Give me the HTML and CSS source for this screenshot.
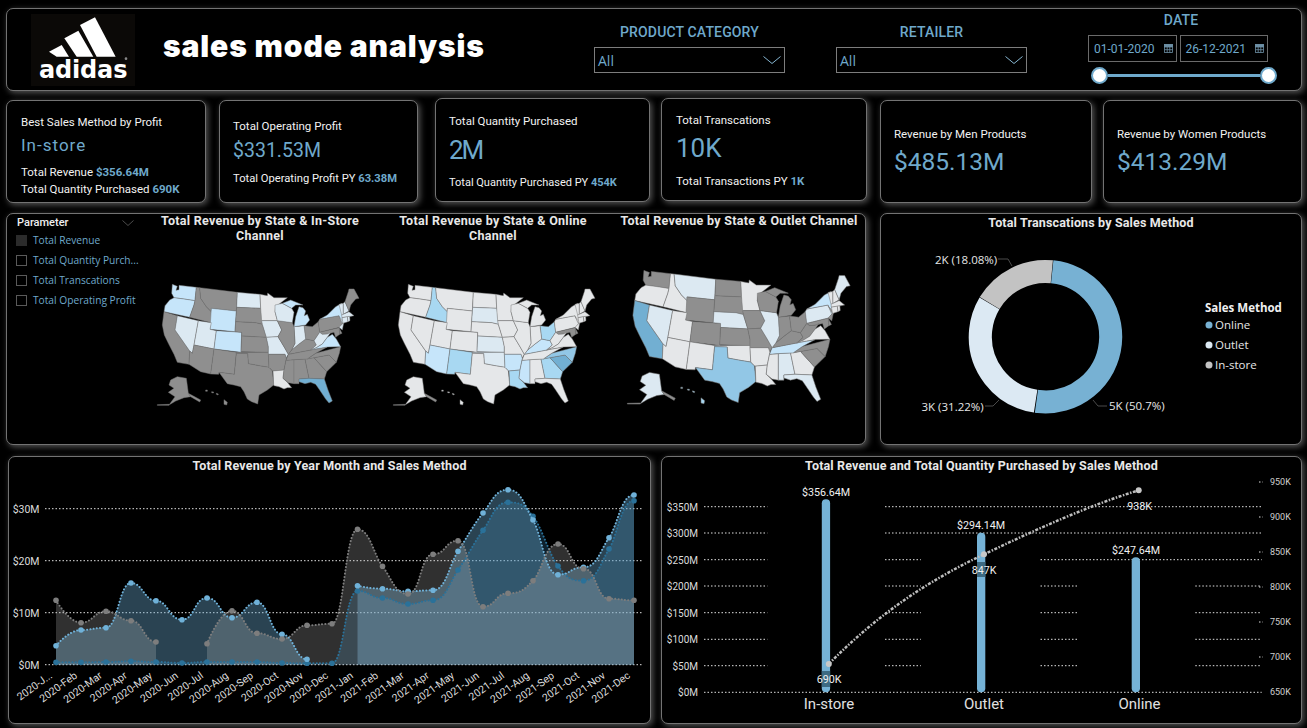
FILE: index.html
```html
<!DOCTYPE html>
<html lang="en">
<head>
<meta charset="utf-8">
<title>sales mode analysis</title>
<link rel="stylesheet" href="styles.css">
</head>
<body>
<main class="page">

<header class="panel header">
  <div class="logo">
    <svg viewBox="18 12 312 216" width="104" height="72">
      <rect x="18" y="12" width="312" height="216" fill="#0b0907"/>
      <polygon points="72,125 110,105 132,140 95,140" fill="#fff"/>
      <polygon points="118,85 160,62 205,140 155,140" fill="#fff"/>
      <polygon points="165,45 210,22 272,140 215,140" fill="#fff"/>
      <text x="42" y="204" class="logo-word">adidas</text>
      <circle cx="303" cy="146" r="4" fill="#888"/>
    </svg>
  </div>
  <h1 class="title">sales mode analysis</h1>
  <div class="filter filter-category">
    <div class="filter-label">PRODUCT CATEGORY</div>
    <div class="dropdown">All
      <svg class="chev" viewBox="0 0 18 8" width="18" height="8"><polyline points="0.5,0.5 9,7.5 17.5,0.5"/></svg>
    </div>
  </div>
  <div class="filter filter-retailer">
    <div class="filter-label">RETAILER</div>
    <div class="dropdown">All
      <svg class="chev" viewBox="0 0 18 8" width="18" height="8"><polyline points="0.5,0.5 9,7.5 17.5,0.5"/></svg>
    </div>
  </div>
  <div class="filter filter-date">
    <div class="filter-label date-label">DATE</div>
    <div class="date-boxes">
      <div class="date-box">01-01-2020
        <svg class="cal" viewBox="0 0 9 9" width="9" height="9"><rect x="0.5" y="0.5" width="8" height="8"/><rect x="0.5" y="0.5" width="8" height="2.5" class="cal-top"/><path d="M3.2 3v5.500M5.800 3v5.500M.5 5.700h8"/></svg>
      </div>
      <div class="date-box">26-12-2021
        <svg class="cal" viewBox="0 0 9 9" width="9" height="9"><rect x="0.5" y="0.5" width="8" height="8"/><rect x="0.5" y="0.5" width="8" height="2.5" class="cal-top"/><path d="M3.2 3v5.500M5.800 3v5.500M.5 5.700h8"/></svg>
      </div>
    </div>
    <div class="slider"><span class="knob"></span><span class="rail"></span><span class="knob"></span></div>
  </div>
</header>

<section class="cards">
  <article class="panel card card-1">
    <p class="card-label">Best Sales Method by Profit</p>
    <p class="card-value value-text">In-store</p>
    <p class="card-sub">Total Revenue <b>$356.64M</b></p>
    <p class="card-sub">Total Quantity Purchased <b>690K</b></p>
  </article>
  <article class="panel card card-2">
    <p class="card-label">Total Operating Profit</p>
    <p class="card-value">$331.53M</p>
    <p class="card-sub">Total Operating Profit PY <b>63.38M</b></p>
  </article>
  <article class="panel card card-3">
    <p class="card-label">Total Quantity Purchased</p>
    <p class="card-value value-big value-tight">2M</p>
    <p class="card-sub">Total Quantity Purchased PY <b>454K</b></p>
  </article>
  <article class="panel card card-4">
    <p class="card-label">Total Transcations</p>
    <p class="card-value value-big">10K</p>
    <p class="card-sub">Total Transactions PY <b>1K</b></p>
  </article>
  <article class="panel card card-5">
    <p class="card-label">Revenue by Men Products</p>
    <p class="card-value value-large">$485.13M</p>
  </article>
  <article class="panel card card-6">
    <p class="card-label">Revenue by Women Products</p>
    <p class="card-value value-large">$413.29M</p>
  </article>
</section>

<section class="row-middle">
  <div class="panel maps">
    <aside class="slicer">
      <div class="slicer-head">Parameter
        <svg class="slicer-chev" viewBox="0 0 12 6" width="12" height="6"><polyline points="0.500,0.500 6,5.500 11.500,0.500"/></svg>
      </div>
      <ul class="slicer-list">
        <li><span class="box box-on"></span>Total Revenue</li>
        <li><span class="box"></span>Total Quantity Purch...</li>
        <li><span class="box"></span>Total Transcations</li>
        <li><span class="box"></span>Total Operating Profit</li>
      </ul>
    </aside>

    <figure class="map-col map-col-1">
      <figcaption class="map-title">Total Revenue by State &amp; In-Store<br>Channel</figcaption>
      <svg class="map" viewBox="-21 -87 648 594" width="216" height="198">
        <defs>
          <path id="WA" d="M40 28 55 34 51 46 60 44 60 31 112 37 108 77 75 72 45 68 38 55z"/>
          <path id="OR" d="M45 68 75 72 108 77 105 90 92 127 15 110 18 92 32 75z"/>
          <path id="CA" d="M15 110 55 122 48 165 92 228 90 268 55 262 45 238 28 205 16 180 10 150z"/>
          <path id="NV" d="M55 122 118 137 105 210 100 235 92 228 48 165z"/>
          <path id="ID" d="M112 37 122 38 125 70 142 95 157 110 157 143 92 127 105 90 108 77z"/>
          <path id="MT" d="M122 38 235 52 232 108 157 100 157 110 142 95 125 70z"/>
          <path id="WY" d="M157 100 232 108 228 170 153 163z"/>
          <path id="UT" d="M118 137 157 143 153 163 172 167 165 222 105 210z"/>
          <path id="CO" d="M172 167 248 172 246 232 165 222z"/>
          <path id="AZ" d="M105 210 165 222 155 297 125 290 90 268 92 228 100 235z"/>
          <path id="NM" d="M165 222 232 232 226 298 180 292 179 298 155 297z"/>
          <path id="ND" d="M235 52 303 58 305 100 233 97z"/>
          <path id="SD" d="M233 97 305 100 308 115 310 148 290 143 230 140z"/>
          <path id="NE" d="M230 140 290 143 310 148 322 187 248 183 248 172 228 170z"/>
          <path id="KS" d="M248 183 322 187 328 215 328 232 246 230z"/>
          <path id="OK" d="M232 232 328 232 330 277 300 272 268 266 266 236 232 235z"/>
          <path id="TX" d="M232 235 266 236 268 266 300 272 330 277 340 287 344 330 325 345 300 360 296 387 278 380 265 372 255 350 245 335 225 330 205 326 180 292 226 298z"/>
          <path id="MN" d="M303 58 325 62 326 54 345 68 385 68 350 95 348 110 355 137 308 137 305 100z"/>
          <path id="IA" d="M308 137 355 137 368 165 357 185 322 187 310 148z"/>
          <path id="MO" d="M322 187 357 185 375 215 388 238 381 250 378 238 328 238 328 215z"/>
          <path id="AR" d="M328 238 378 238 382 250 375 285 342 288 340 287 330 277z"/>
          <path id="LA" d="M342 288 375 285 372 310 385 322 398 338 385 338 375 342 360 335 345 332 344 330z"/>
          <path id="MS" d="M381 256 405 254 405 326 388 323 372 310 375 285z"/>
          <path id="AL" d="M405 254 438 252 450 310 420 312 420 326 405 326z"/>
          <path id="GA" d="M438 252 465 248 503 290 496 312 450 310z"/>
          <path id="FL" d="M420 312 450 310 496 312 507 345 520 378 510 384 500 372 482 345 470 328 455 322 438 326 420 320z"/>
          <path id="SC" d="M465 248 510 240 532 262 503 290z"/>
          <path id="NC" d="M445 252 470 235 545 215 541 235 532 262 510 240 465 248z"/>
          <path id="TN" d="M381 256 388 238 470 222 505 216 470 235 445 252 405 254z"/>
          <path id="KY" d="M388 238 398 225 420 207 440 192 465 197 472 210 455 225z"/>
          <path id="OH" d="M435 152 460 155 478 140 482 172 465 197 440 192z"/>
          <path id="IN" d="M405 155 435 152 440 192 420 207 398 225 408 205z"/>
          <path id="IL" d="M355 137 400 143 405 155 408 205 398 225 388 238 375 215 357 185 368 165z"/>
          <path id="WI" d="M348 90 370 85 398 100 405 112 400 143 355 137 348 110z"/>
          <path id="MI" d="M370 85 395 75 432 90 410 90 398 100z M410 125 420 95 432 98 440 108 436 122 445 118 452 135 440 150 405 155z"/>
          <path id="PA" d="M482 133 540 122 552 145 542 157 482 172 478 140z"/>
          <path id="NY" d="M482 133 505 120 530 95 548 85 553 118 550 128 555 140 549 145 540 122z"/>
          <path id="NJ" d="M540 125 555 140 550 165 540 157 552 145z"/>
          <path id="DE" d="M540 158 549 175 542 178z"/>
          <path id="MD" d="M482 172 540 158 542 178 530 187 525 172 505 177 490 178z"/>
          <path id="WV" d="M465 197 482 172 490 178 505 177 515 172 505 187 490 207 472 218 455 225 472 210z"/>
          <path id="VA" d="M455 225 472 218 490 207 505 187 520 178 532 192 545 215 505 216 470 222z"/>
          <path id="VT" d="M540 88 553 85 553 118 548 120z"/>
          <path id="NH" d="M553 85 558 80 570 108 553 118z"/>
          <path id="ME" d="M558 80 568 50 570 42 585 42 600 70 590 72 575 90 570 108z"/>
          <path id="MA" d="M548 120 570 110 585 122 570 125 549 128z"/>
          <path id="CT" d="M549 128 565 125 567 140 552 145z"/>
          <path id="RI" d="M565 125 572 124 573 137 567 140z"/>
          <path id="AK" d="M35 315 55 305 82 310 88 355 95 365 75 368 50 378 30 390 48 365 28 352 45 340 30 330z"/>
          <path id="AS" d="M88 355 125 375 122 381 95 365z"/>
          <path id="AC" d="M30 388 -5 389 -5 391 30 391z"/>
          <path id="HI" d="M140 345 145 345 145 349 140 349z M158 350 164 351 163 354 158 353z M172 355 178 357 177 360 172 358z M195 374 205 382 203 390 195 388z"/>
        </defs>
        <use href="#WA" class="f3"/><use href="#OR" class="f3"/><use href="#CA" class="f0"/><use href="#NV" class="f2"/><use href="#ID" class="f0"/><use href="#MT" class="f0"/>
        <use href="#WY" class="f3"/><use href="#UT" class="f2"/><use href="#CO" class="f3"/><use href="#AZ" class="f0"/><use href="#NM" class="f0"/><use href="#ND" class="f2"/>
        <use href="#SD" class="f0"/><use href="#NE" class="f0"/><use href="#KS" class="f0"/><use href="#OK" class="f0"/><use href="#TX" class="f0"/><use href="#MN" class="f1"/>
        <use href="#IA" class="f2"/><use href="#MO" class="f2"/><use href="#AR" class="f0"/><use href="#LA" class="f1"/><use href="#MS" class="f0"/><use href="#AL" class="f0"/>
        <use href="#GA" class="f0"/><use href="#FL" class="f6"/><use href="#SC" class="f0"/><use href="#NC" class="f0"/><use href="#TN" class="f0"/><use href="#KY" class="f0"/>
        <use href="#OH" class="f0"/><use href="#IN" class="f2"/><use href="#IL" class="f0"/><use href="#WI" class="f2"/><use href="#MI" class="f3"/><use href="#PA" class="f0"/>
        <use href="#NY" class="f3"/><use href="#NJ" class="f2"/><use href="#DE" class="f0"/><use href="#MD" class="f0"/><use href="#WV" class="f2"/><use href="#VA" class="f3"/>
        <use href="#VT" class="f2"/><use href="#NH" class="f2"/><use href="#ME" class="f0"/><use href="#MA" class="f2"/><use href="#CT" class="f2"/><use href="#RI" class="f2"/>
        <use href="#AK" class="f0"/><use href="#AS" class="f0"/><use href="#AC" class="f0"/><use href="#HI" class="f0"/>
      </svg>
    </figure>

    <figure class="map-col map-col-2">
      <figcaption class="map-title">Total Revenue by State &amp; Online<br>Channel</figcaption>
      <svg class="map" viewBox="-81 -87 750 594" width="250" height="198">
        <use href="#WA" class="f1"/><use href="#OR" class="f1"/><use href="#CA" class="f1"/><use href="#NV" class="f1"/><use href="#ID" class="f4"/><use href="#MT" class="f1"/>
        <use href="#WY" class="f1"/><use href="#UT" class="f1"/><use href="#CO" class="f1"/><use href="#AZ" class="f3"/><use href="#NM" class="f4"/><use href="#ND" class="f1"/>
        <use href="#SD" class="f2"/><use href="#NE" class="f1"/><use href="#KS" class="f2"/><use href="#OK" class="f2"/><use href="#TX" class="f1"/><use href="#MN" class="f1"/>
        <use href="#IA" class="f1"/><use href="#MO" class="f1"/><use href="#AR" class="f3"/><use href="#LA" class="f4"/><use href="#MS" class="f3"/><use href="#AL" class="f1"/>
        <use href="#GA" class="f4"/><use href="#FL" class="f1"/><use href="#SC" class="f6"/><use href="#NC" class="f5"/><use href="#TN" class="f1"/><use href="#KY" class="f3"/>
        <use href="#OH" class="f4"/><use href="#IN" class="f1"/><use href="#IL" class="f1"/><use href="#WI" class="f1"/><use href="#MI" class="f1"/><use href="#PA" class="f1"/>
        <use href="#NY" class="f1"/><use href="#NJ" class="f1"/><use href="#DE" class="f0"/><use href="#MD" class="f0"/><use href="#WV" class="f1"/><use href="#VA" class="f1"/>
        <use href="#VT" class="f1"/><use href="#NH" class="f1"/><use href="#ME" class="f1"/><use href="#MA" class="f1"/><use href="#CT" class="f1"/><use href="#RI" class="f1"/>
        <use href="#AK" class="f1"/><use href="#AS" class="f0"/><use href="#AC" class="f0"/><use href="#HI" class="f1"/>
      </svg>
    </figure>

    <figure class="map-col map-col-3">
      <figcaption class="map-title">Total Revenue by State &amp; Outlet Channel</figcaption>
      <svg class="map" viewBox="-29.800 -38.200 669.400 537.600" width="247" height="198">
        <use href="#WA" class="f0"/><use href="#OR" class="f1"/><use href="#CA" class="f6"/><use href="#NV" class="f2"/><use href="#ID" class="f1"/><use href="#MT" class="f2"/>
        <use href="#WY" class="f0"/><use href="#UT" class="f1"/><use href="#CO" class="f0"/><use href="#AZ" class="f1"/><use href="#NM" class="f1"/><use href="#ND" class="f0"/>
        <use href="#SD" class="f0"/><use href="#NE" class="f2"/><use href="#KS" class="f0"/><use href="#OK" class="f1"/><use href="#TX" class="f5"/><use href="#MN" class="f1"/>
        <use href="#IA" class="f0"/><use href="#MO" class="f0"/><use href="#AR" class="f1"/><use href="#LA" class="f1"/><use href="#MS" class="f1"/><use href="#AL" class="f2"/>
        <use href="#GA" class="f1"/><use href="#FL" class="f2"/><use href="#SC" class="f0"/><use href="#NC" class="f0"/><use href="#TN" class="f3"/><use href="#KY" class="f0"/>
        <use href="#OH" class="f0"/><use href="#IN" class="f0"/><use href="#IL" class="f2"/><use href="#WI" class="f0"/><use href="#MI" class="f0"/><use href="#PA" class="f2"/>
        <use href="#NY" class="f3"/><use href="#NJ" class="f0"/><use href="#DE" class="f0"/><use href="#MD" class="f0"/><use href="#WV" class="f0"/><use href="#VA" class="f1"/>
        <use href="#VT" class="f1"/><use href="#NH" class="f1"/><use href="#ME" class="f2"/><use href="#MA" class="f1"/><use href="#CT" class="f1"/><use href="#RI" class="f1"/>
        <use href="#AK" class="f2"/><use href="#AS" class="f0"/><use href="#AC" class="f0"/><use href="#HI" class="f4"/>
      </svg>
    </figure>
  </div>

  <figure class="panel donut-panel">
    <figcaption class="chart-title">Total Transcations by Sales Method</figcaption>
    <svg class="chart" viewBox="881 232 420 212" width="420" height="212">
      <g transform="rotate(-84.100 1045.500 336.700)" fill="none" stroke-width="23.100">
        <circle cx="1045.500" cy="336.700" r="65.200" pathLength="100" stroke="#c3c3c3" stroke-dasharray="17.900 82.100" stroke-dashoffset="-82"/>
        <circle cx="1045.500" cy="336.700" r="65.200" pathLength="100" stroke="#dce9f3" stroke-dasharray="31.120 68.880" stroke-dashoffset="-50.800"/>
        <circle cx="1045.500" cy="336.700" r="65.200" pathLength="100" stroke="#77b1d3" stroke-dasharray="50.600 49.400"/>
      </g>
      <g class="leaders">
        <polyline points="998,259 1008,259 1012,266"/>
        <polyline points="985,406 993,406 999,400"/>
        <polyline points="1107,406 1098,406 1093,400"/>
      </g>
      <text x="935" y="264" class="donut-label">2K (18.08%)</text>
      <text x="921.500" y="411" class="donut-label">3K (31.22%)</text>
      <text x="1109" y="410" class="donut-label">5K (50.7%)</text>
      <text x="1205" y="312" class="legend-head">Sales Method</text>
      <circle cx="1209" cy="325" r="3.500" fill="#77b1d3"/>
      <text x="1215" y="329" class="donut-label">Online</text>
      <circle cx="1209" cy="345" r="3.500" fill="#dce9f3"/>
      <text x="1215" y="349" class="donut-label">Outlet</text>
      <circle cx="1209" cy="365" r="3.500" fill="#c3c3c3"/>
      <text x="1215" y="369" class="donut-label">In-store</text>
    </svg>
  </figure>
</section>

<section class="row-bottom">
  <figure class="panel area-panel">
    <figcaption class="chart-title">Total Revenue by Year Month and Sales Method</figcaption>
    <svg class="chart" viewBox="9 475 641 248" width="641" height="248">
      <defs>
        <marker id="dot-gray" markerUnits="userSpaceOnUse" markerWidth="8" markerHeight="8" refX="4" refY="4"><circle cx="4" cy="4" r="2.800" fill="#7d7d7d"/></marker>
        <marker id="dot-light" markerUnits="userSpaceOnUse" markerWidth="8" markerHeight="8" refX="4" refY="4"><circle cx="4" cy="4" r="2.800" fill="#6fb1d8"/></marker>
        <marker id="dot-dark" markerUnits="userSpaceOnUse" markerWidth="8" markerHeight="8" refX="4" refY="4"><circle cx="4" cy="4" r="2.800" fill="#2a7199"/></marker>
      </defs>
      <g class="grid">
        <line x1="45" x2="643" y1="508.700" y2="508.700"/>
        <line x1="45" x2="643" y1="560.700" y2="560.700"/>
        <line x1="45" x2="643" y1="612.700" y2="612.700"/>
        <line x1="45" x2="643" y1="664.700" y2="664.700"/>
      </g>
      <g class="axis-end axis-area">
        <text x="39.500" y="512.500">$30M</text>
        <text x="39.500" y="564.500">$20M</text>
        <text x="39.500" y="616.500">$10M</text>
        <text x="39.500" y="668.500">$0M</text>
      </g>

      <path class="area-online" d="M56 662.300 S69 662.300 81 662.300 S94 662 106 662 S119 661.300 131 661.300 S144 662 156 662 S169 663 182 663 S194 662 207 662 S220 662 232 662 S245 662 257 662 S270 663 282 663 S295 663.300 307 663.300 S320 663.300 332 663.300 S345 591 357.500 591 S370 598 382.500 598 S395 604 408 604 S420 600.300 433 600.300 S449 582.600 458 570 S474 542.500 483 530.300 S495 502.300 508 502.300 S524 504.900 533 516.300 S549 554.400 558 566 S570 580.700 583.500 580.700 S600 563.400 609 549 S621 500.700 634 500.700 V664.700 H56 Z"/>
      <path class="area-outlet" d="M56 645.700 S69 630 81 630 S94 627.700 106 627.700 S119 583 131 583 S144 600.700 156 600.700 S169 619.700 182 619.700 S194 598 207 598 S220 617.700 232 617.700 S245 602.300 257 602.300 S270 634.300 282 634.300 S295 659.300 307 659.300 V664.700 H56 Z"/>
      <path class="area-outlet" d="M357.500 585.700 S370 588.700 382.500 588.700 S395 591.300 408 591.300 S420 590.300 433 590.300 S449 565.200 458 551.300 S474 524 483 513 S495 489.700 508 489.700 S524 504.700 533 520 S545 574.700 558 574.700 S570 567.300 583.500 567.300 S600 550.800 609 537.700 S621 495 634 495 V664.700 H357.500 Z"/>
      <path class="area-store" d="M56 600.300 S69 622.700 81 622.700 S94 611.300 106 611.300 S119 620.700 131 620.700 S144 642 156 642 V664.700 H56 Z"/>
      <path class="area-store" d="M207 643.700 S220 610.700 232 610.700 S245 633.300 257 633.300 S270 639 282 639 S295 625.300 307 625.300 S320 623.700 332 623.700 S345 529.300 357.500 529.300 S373.500 554.700 382.500 566.300 S395 594 408 594 S420 554.300 433 554.300 S445 540.700 458 540.700 S470 606.700 483 606.700 S495 593.300 508 593.300 S524 589.600 533 580.700 S545 544 558 544 S570 568.700 583.500 568.700 S596 598.700 609 598.700 S621 600.300 634 600.300 V664.700 H207 Z"/>

      <path class="line line-online" d="M56 662.300 S69 662.300 81 662.300 S94 662 106 662 S119 661.300 131 661.300 S144 662 156 662 S169 663 182 663 S194 662 207 662 S220 662 232 662 S245 662 257 662 S270 663 282 663 S295 663.300 307 663.300 S320 663.300 332 663.300 S345 591 357.500 591 S370 598 382.500 598 S395 604 408 604 S420 600.300 433 600.300 S449 582.600 458 570 S474 542.500 483 530.300 S495 502.300 508 502.300 S524 504.900 533 516.300 S549 554.400 558 566 S570 580.700 583.500 580.700 S600 563.400 609 549 S621 500.700 634 500.700"/>
      <path class="line line-outlet" d="M56 645.700 S69 630 81 630 S94 627.700 106 627.700 S119 583 131 583 S144 600.700 156 600.700 S169 619.700 182 619.700 S194 598 207 598 S220 617.700 232 617.700 S245 602.300 257 602.300 S270 634.300 282 634.300 S295 659.300 307 659.300"/>
      <path class="line line-outlet" d="M357.500 585.700 S370 588.700 382.500 588.700 S395 591.300 408 591.300 S420 590.300 433 590.300 S449 565.200 458 551.300 S474 524 483 513 S495 489.700 508 489.700 S524 504.700 533 520 S545 574.700 558 574.700 S570 567.300 583.500 567.300 S600 550.800 609 537.700 S621 495 634 495"/>
      <path class="line line-store" d="M56 600.300 S69 622.700 81 622.700 S94 611.300 106 611.300 S119 620.700 131 620.700 S144 642 156 642"/>
      <path class="line line-store" d="M207 643.700 S220 610.700 232 610.700 S245 633.300 257 633.300 S270 639 282 639 S295 625.300 307 625.300 S320 623.700 332 623.700 S345 529.300 357.500 529.300 S373.500 554.700 382.500 566.300 S395 594 408 594 S420 554.300 433 554.300 S445 540.700 458 540.700 S470 606.700 483 606.700 S495 593.300 508 593.300 S524 589.600 533 580.700 S545 544 558 544 S570 568.700 583.500 568.700 S596 598.700 609 598.700 S621 600.300 634 600.300"/>

      <g class="month-labels">
        <text transform="translate(53 677) rotate(-36)">2020-J...</text>
        <text transform="translate(78 677) rotate(-36)">2020-Feb</text>
        <text transform="translate(103 677) rotate(-36)">2020-Mar</text>
        <text transform="translate(128 677) rotate(-36)">2020-Apr</text>
        <text transform="translate(153 677) rotate(-36)">2020-May</text>
        <text transform="translate(179 677) rotate(-36)">2020-Jun</text>
        <text transform="translate(204 677) rotate(-36)">2020-Jul</text>
        <text transform="translate(229 677) rotate(-36)">2020-Aug</text>
        <text transform="translate(254 677) rotate(-36)">2020-Sep</text>
        <text transform="translate(279 677) rotate(-36)">2020-Oct</text>
        <text transform="translate(304 677) rotate(-36)">2020-Nov</text>
        <text transform="translate(329 677) rotate(-36)">2020-Dec</text>
        <text transform="translate(354 677) rotate(-36)">2021-Jan</text>
        <text transform="translate(379 677) rotate(-36)">2021-Feb</text>
        <text transform="translate(405 677) rotate(-36)">2021-Mar</text>
        <text transform="translate(430 677) rotate(-36)">2021-Apr</text>
        <text transform="translate(455 677) rotate(-36)">2021-May</text>
        <text transform="translate(480 677) rotate(-36)">2021-Jun</text>
        <text transform="translate(505 677) rotate(-36)">2021-Jul</text>
        <text transform="translate(530 677) rotate(-36)">2021-Aug</text>
        <text transform="translate(555 677) rotate(-36)">2021-Sep</text>
        <text transform="translate(580 677) rotate(-36)">2021-Oct</text>
        <text transform="translate(606 677) rotate(-36)">2021-Nov</text>
        <text transform="translate(631 677) rotate(-36)">2021-Dec</text>
      </g>
    </svg>
  </figure>

  <figure class="panel combo-panel">
    <figcaption class="chart-title">Total Revenue and Total Quantity Purchased by Sales Method</figcaption>
    <svg class="chart" viewBox="662 475 639 248" width="639" height="248">
      <g class="grid">
        <path d="M704 506.700H767.300M885 506.700H1261.700"/>
        <path d="M704 533H767.300M885 533H1261.700"/>
        <path d="M704 559.700H767.300M885 559.700H920.800M1040.500 559.700H1261.700"/>
        <path d="M704 586H767.300M885 586H920.800M1040.500 586H1077.200M1195.300 586H1261.700"/>
        <path d="M704 612.700H767.300M885 612.700H920.800M1040.500 612.700H1077.200M1195.300 612.700H1261.700"/>
        <path d="M704 639.300H767.300M885 639.300H920.800M1040.500 639.300H1077.200M1195.300 639.300H1261.700"/>
        <path d="M704 665.700H767.300M885 665.700H920.800M1040.500 665.700H1077.200M1195.300 665.700H1261.700"/>
        <path d="M704 692.300H1261.700"/>
        <path d="M1259 482H1263M1259 517H1263M1259 552H1263M1259 587H1263M1259 622H1263M1259 657H1263"/>
      </g>
      <g class="axis-end">
        <text x="698" y="510.500">$350M</text>
        <text x="698" y="537">$300M</text>
        <text x="698" y="563.500">$250M</text>
        <text x="698" y="590">$200M</text>
        <text x="698" y="616.500">$150M</text>
        <text x="698" y="643">$100M</text>
        <text x="698" y="669.500">$50M</text>
        <text x="698" y="696">$0M</text>
      </g>
      <g class="axis-right">
        <text x="1270" y="485">950K</text>
        <text x="1270" y="520">900K</text>
        <text x="1270" y="555">850K</text>
        <text x="1270" y="590">800K</text>
        <text x="1270" y="625">750K</text>
        <text x="1270" y="660">700K</text>
        <text x="1270" y="695">650K</text>
      </g>
      <rect class="bar" x="821.800" y="499.300" width="8.300" height="193" rx="4"/>
      <rect class="bar" x="977" y="532.700" width="8.300" height="159.600" rx="4"/>
      <rect class="bar" x="1131.700" y="557.300" width="8.300" height="135" rx="4"/>
      <rect class="bar-band" x="821.800" y="671" width="8.300" height="16"/>
      <rect class="bar-band" x="977" y="562" width="8.300" height="15"/>
      <path class="combo-line" d="M828.800 664 C880 612 930 580 984 554.300 S1090 505 1138.700 490.300"/>
      <circle cx="828.800" cy="664" r="3" fill="#c8c8c8"/>
      <circle cx="984" cy="554.300" r="3" fill="#c8c8c8"/>
      <circle cx="1138.700" cy="490.300" r="3" fill="#c8c8c8"/>
      <g class="data-labels">
        <text x="826" y="496">$356.64M</text>
        <text x="981" y="529">$294.14M</text>
        <text x="1136" y="554">$247.64M</text>
        <text x="829" y="683">690K</text>
        <text x="984" y="574">847K</text>
        <text x="1139.500" y="510">938K</text>
      </g>
      <g class="cat-labels">
        <text x="829" y="709">In-store</text>
        <text x="984" y="709">Outlet</text>
        <text x="1139.500" y="709">Online</text>
      </g>
    </svg>
  </figure>
</section>

</main>
</body>
</html>
```

FILE: styles.css
```css
* { box-sizing: border-box; }
html, body { margin: 0; padding: 0; background: #000; }
.page {
  width: 1307px;
  height: 728px;
  overflow: hidden;
  display: flex;
  flex-direction: column;
  font-family: Roboto, "Liberation Sans", sans-serif;
  color: #f0f0f0;
}
p, h1, ul, figure { margin: 0; padding: 0; }

.panel {
  background: #000;
  border: 1px solid #737373;
  border-radius: 7px;
  box-shadow: 2px 2px 6px rgba(170, 170, 170, .5);
  flex: none;
}

/* header */
.header {
  display: flex;
  align-items: flex-start;
  margin: 8px 0 0 6px;
  width: 1296px;
  height: 83px;
}
.logo { flex: none; margin: 5px 0 0 24px; width: 104px; height: 72px; }
.logo svg { display: block; }
.logo-word { font: 700 72px "DejaVu Sans", sans-serif; fill: #fff; letter-spacing: -.5px; }
.title {
  flex: none;
  width: 431px;
  margin: 19px 0 0 28px;
  font: 900 30px/36px Inter, "Liberation Sans", sans-serif;
  color: #fff;
  letter-spacing: .9px;
  white-space: nowrap;
}
.filter { flex: none; width: 191px; margin-top: 15px; }
.filter-retailer { margin-left: 51px; }
.filter-date { margin-left: 61px; margin-top: 3px; width: 190px; }
.filter-label {
  text-align: center;
  font-size: 14px;
  font-weight: 500;
  line-height: 17px;
  height: 23px;
  color: #6fa9cb;
  letter-spacing: .15px;
}
.date-label { width: 186px; height: 23px; }
.dropdown {
  position: relative;
  height: 26px;
  border: 1px solid #7d7d7d;
  color: #6fa9cb;
  font: 14px/25px "Open Sans", sans-serif;
  padding-left: 3px;
}
.chev { position: absolute; right: 3px; top: 8px; fill: none; stroke: #86b6d2; stroke-width: 1; }
.date-boxes { display: flex; gap: 3px; }
.date-box {
  display: flex;
  align-items: center;
  justify-content: space-between;
  width: 88.500px;
  height: 27px;
  border: 1px solid #6a6a6a;
  padding: 0 3px 0 5px;
  font-size: 12px;
  color: #6fa9cb;
}
.cal { fill: none; stroke: #6d8fa5; stroke-width: .8; }
.cal-top { fill: #6d8fa5; }
.slider { display: flex; align-items: center; margin: 5px 0 0 3px; width: 186px; }
.knob { flex: none; width: 17px; height: 17px; border-radius: 50%; background: #fff; border: 2px solid #6fa9cb; }
.rail { flex: 1; height: 3px; background: #6fa9cb; }

/* cards */
.cards { display: flex; align-items: flex-start; margin: 7px 0 0 6px; height: 105px; }
.card { padding-left: 13px; }
.card-label { font-size: 11.500px; line-height: 14px; color: #f2f2f2; white-space: nowrap; }
.card-value { font-size: 19.500px; line-height: 30px; color: #6fa9cb; white-space: nowrap; }
.value-text { font-size: 17px; line-height: 24px; letter-spacing: 1px; }
.value-big { font-size: 26px; }
.value-tight { letter-spacing: -2px; }
.value-large { font-size: 24.500px; }
.card-sub { font-size: 11.500px; line-height: 17px; color: #f2f2f2; white-space: nowrap; }
.card-sub b { color: #6fa9cb; font-weight: 700; }

.card-1 { width: 200px; height: 103px; margin-top: 2px; padding: 14px 0 0 14px; }
.card-1 .card-value { margin-top: 4px; }
.card-1 .card-value + .card-sub { margin-top: 6.500px; }
.card-2 { width: 199px; height: 103px; margin: 2px 0 0 13px; padding-top: 18px; }
.card-2 .card-value { margin-top: 3px; }
.card-2 .card-sub { margin-top: 3.500px; font-size: 11.200px; }
.card-3 { width: 215px; height: 104px; margin-left: 17px; padding-top: 15px; }
.card-3 .card-value { margin-top: 7px; }
.card-3 .card-sub { margin-top: 8.500px; font-size: 11px; }
.card-4 { width: 206px; height: 103px; margin-left: 11px; padding: 14px 0 0 14px; }
.card-4 .card-value { margin-top: 6px; }
.card-4 .card-sub { margin-top: 9.500px; }
.card-5 { width: 212px; height: 103px; margin: 2px 0 0 13px; padding-top: 26px; }
.card-5 .card-value { margin-top: 6px; }
.card-6 { width: 199px; height: 103px; margin: 2px 0 0 11px; padding-top: 26px; }
.card-6 .card-value { margin-top: 6px; }

/* maps row */
.row-middle { display: flex; margin: 10px 0 0 6px; height: 232px; }
.maps { display: flex; width: 860px; height: 232px; }
.slicer { flex: none; width: 145px; padding: 2px 0 0 9px; position: relative; }
.slicer-head { font-size: 11px; line-height: 14px; font-weight: 500; color: #f0f0f0; margin-left: 1px; }
.slicer-chev { position: absolute; left: 115px; top: 6px; fill: none; stroke: #4c4c4c; }
.slicer-list { list-style: none; margin-top: 3px; display: flex; flex-direction: column; gap: 5px; font: 10.200px/15px "Open Sans", sans-serif; color: #6fa9cb; white-space: nowrap; }
.slicer-list li { display: flex; align-items: center; gap: 6px; }
.box { flex: none; width: 11px; height: 11px; border: 1px solid #5a5a5a; }
.box-on { background: #2b2b2b; border-color: #2b2b2b; }

.map-col { flex: none; }
.map-col-1 { width: 216px; }
.map-col-2 { width: 250px; }
.map-col-3 { width: 247px; }
.map-title {
  height: 33px;
  margin-top: -1px;
  text-align: center;
  font-size: 12.500px;
  font-weight: 700;
  line-height: 15px;
  color: #e8e8e8;
  letter-spacing: .28px;
  white-space: nowrap;
}
.map-col-3 .map-title { padding-right: 5px; }
.map { display: block; }
.map use { stroke: #757575; stroke-width: 1.400; stroke-linejoin: round; }
.f0 { fill: #8f8f8f; }
.f1 { fill: #e5e7e9; }
.f2 { fill: #dce9f2; }
.f3 { fill: #c6e5fa; }
.f4 { fill: #a8d8f2; }
.f5 { fill: #92c7e6; }
.f6 { fill: #72afd2; }

/* donut */
.donut-panel { width: 422px; height: 232px; margin-left: 14px; }
.chart-title {
  height: 18px;
  text-align: center;
  font-size: 12.500px;
  font-weight: 700;
  line-height: 18px;
  color: #e8e8e8;
  letter-spacing: .15px;
  white-space: nowrap;
}
.chart { display: block; }
.donut-label { font: 11.500px "Open Sans", sans-serif; fill: #e6e6e6; }
.legend-head { font: 700 11.500px "Open Sans", sans-serif; fill: #f0f0f0; }
.leaders polyline { fill: none; stroke: #4a4a4a; }

/* bottom row */
.row-bottom { display: flex; margin: 11px 0 0 8px; height: 268px; }
.area-panel { width: 643px; height: 268px; }
.combo-panel { width: 641px; height: 268px; margin-left: 10px; }
.grid line, .grid path { stroke: #e0e0e0; stroke-width: 1; stroke-dasharray: 1.500 2; fill: none; }
.axis-end text { font-size: 10px; fill: #dcdcdc; text-anchor: end; }
.axis-area text { font-size: 10.500px; }
.axis-right text { font-size: 9px; fill: #cfcfcf; }
.month-labels text { font-size: 10.500px; fill: #dcdcdc; text-anchor: end; }

.area-store { fill: #c8c8c8; fill-opacity: .24; }
.area-outlet { fill: #6fb1d8; fill-opacity: .38; }
.area-online { fill: #3a8cbc; fill-opacity: .24; }
.line { fill: none; stroke-width: 2; stroke-linecap: round; stroke-dasharray: .1 3.200; }
.line-store { stroke: #7d7d7d; marker-start: url(#dot-gray); marker-mid: url(#dot-gray); marker-end: url(#dot-gray); }
.line-outlet { stroke: #6fb1d8; marker-start: url(#dot-light); marker-mid: url(#dot-light); marker-end: url(#dot-light); }
.line-online { stroke: #2a7199; marker-start: url(#dot-dark); marker-mid: url(#dot-dark); marker-end: url(#dot-dark); }

.bar { fill: #75b2d6; }
.bar-band { fill: #3d6a82; }
.combo-line { fill: none; stroke: #bdbdbd; stroke-width: 2.500; stroke-dasharray: 3 1.500 1.500 1.500; }
.data-labels text { font-size: 10.700px; fill: #f0f0f0; text-anchor: middle; }
.cat-labels text { font-size: 15px; fill: #e0e0e0; text-anchor: middle; }
```
